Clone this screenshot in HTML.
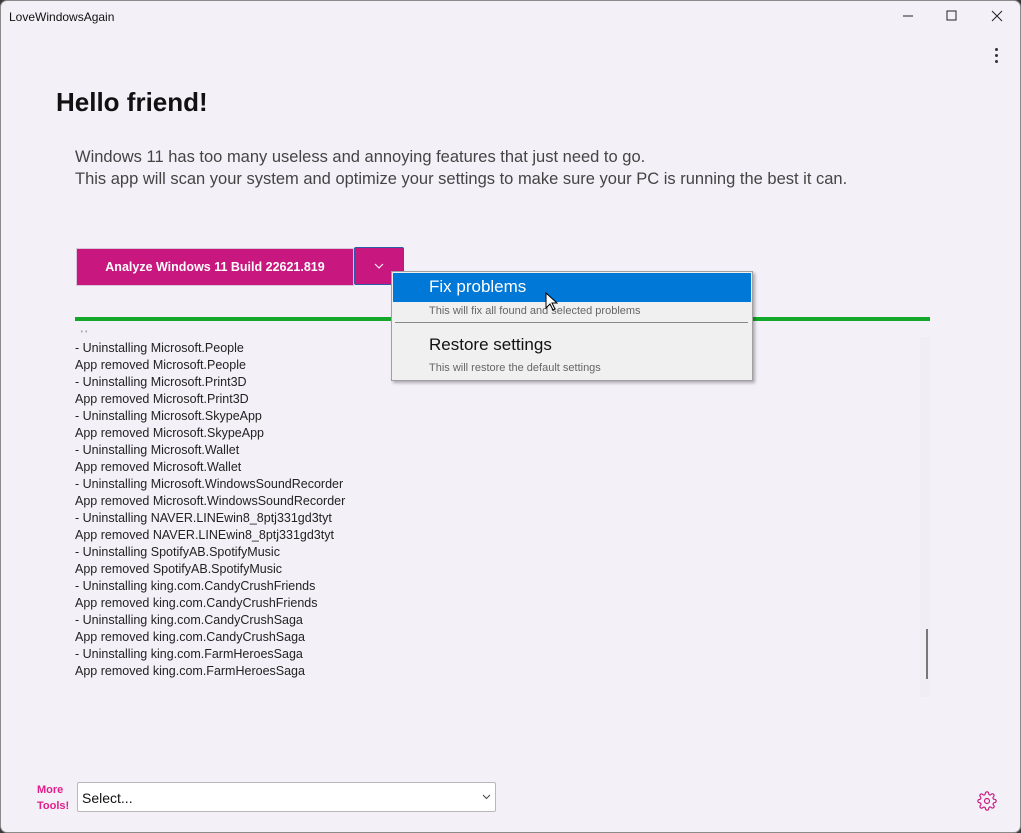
<!DOCTYPE html>
<html><head><meta charset="utf-8"><style>
body{margin:0;width:1021px;height:833px;overflow:hidden;background:#3a3a3a;font-family:"Liberation Sans",sans-serif}
#win{position:absolute;left:0;top:0;width:1021px;height:833px;box-sizing:border-box;background:#f3f0f8;border:1px solid #8a8a8a;border-radius:7px;overflow:hidden}
.t{position:absolute;white-space:nowrap}
.log div{height:17px;font-size:12.5px;color:#222;letter-spacing:0}
</style></head><body><div id="win">
<div class="t" style="left:8px;top:9px;font-size:12px;color:#111">LoveWindowsAgain</div>
<svg class="t" style="left:895px;top:4px" width="120" height="22"><g stroke="#222" fill="none" stroke-width="1"><path d="M7 11h10"/><path d="M51 6h9v9h-9z"/><path d="M96 6l10 10M106 6l-10 10"/></g></svg>
<div class="t" style="left:994px;top:47px;width:3px;height:3px;background:#333;border-radius:2px;box-shadow:0 6px 0 #333,0 12px 0 #333"></div>
<div class="t" style="left:55px;top:86px;font-size:26px;font-weight:bold;color:#111">Hello friend!</div>
<div class="t" style="left:74px;top:145px;font-size:16.5px;color:#444;line-height:22px">Windows 11 has too many useless and annoying features that just need to go.<br>This app will scan your system and optimize your settings to make sure your PC is running the best it can.</div>
<div class="t" style="left:75px;top:247px;width:276px;height:36px;background:#c8177f;border:1px solid #d8c8d8;color:#fff;font-size:12.5px;font-weight:bold;text-align:center;line-height:36px">Analyze Windows 11 Build 22621.819</div>
<div class="t" style="left:353px;top:246px;width:48px;height:36px;background:#c8177f;border:1px solid #2a5aa8;border-radius:2px"><svg style="position:absolute;left:19px;top:15px" width="10" height="6"><path d="M1 1l4 4 4-4" stroke="#fff" fill="none"/></svg></div>
<div class="t" style="left:74px;top:316px;width:855px;height:4px;background:#13a829"></div>
<div class="t" style="left:919px;top:336px;width:10px;height:360px;background:#f0edf4"></div>
<div class="t" style="left:925px;top:628px;width:2px;height:50px;background:#777"></div>
<div class="t" style="left:80px;top:328px;font-size:9px;color:#555">' '</div>
<div class="t log" style="left:74px;top:340px">
<div>- Uninstalling Microsoft.People</div><div>App removed Microsoft.People</div><div>- Uninstalling Microsoft.Print3D</div><div>App removed Microsoft.Print3D</div><div>- Uninstalling Microsoft.SkypeApp</div><div>App removed Microsoft.SkypeApp</div><div>- Uninstalling Microsoft.Wallet</div><div>App removed Microsoft.Wallet</div><div>- Uninstalling Microsoft.WindowsSoundRecorder</div><div>App removed Microsoft.WindowsSoundRecorder</div><div>- Uninstalling NAVER.LINEwin8_8ptj331gd3tyt</div><div>App removed NAVER.LINEwin8_8ptj331gd3tyt</div><div>- Uninstalling SpotifyAB.SpotifyMusic</div><div>App removed SpotifyAB.SpotifyMusic</div><div>- Uninstalling king.com.CandyCrushFriends</div><div>App removed king.com.CandyCrushFriends</div><div>- Uninstalling king.com.CandyCrushSaga</div><div>App removed king.com.CandyCrushSaga</div><div>- Uninstalling king.com.FarmHeroesSaga</div><div>App removed king.com.FarmHeroesSaga</div>
</div>
<div class="t" style="left:390px;top:270px;width:360px;height:108px;background:#f0f0f0;border:1px solid #a0a0a0;box-shadow:2px 2px 3px rgba(0,0,0,.3)">
<div style="position:absolute;left:1px;top:1px;width:358px;height:29px;background:#0078d7"></div>
<div class="t" style="left:37px;top:5px;font-size:17px;color:#fff">Fix problems</div>
<div class="t" style="left:37px;top:33px;font-size:11px;color:#666">This will fix all found and selected problems</div>
<div class="t" style="left:3px;top:50px;width:353px;height:1px;background:#888"></div>
<div class="t" style="left:37px;top:63px;font-size:17px;color:#111">Restore settings</div>
<div class="t" style="left:37px;top:90px;font-size:11px;color:#666">This will restore the default settings</div>
</div>
<svg class="t" style="left:544px;top:291px" width="14" height="20"><path d="M1 1v15l4-4 3 6 2-1-3-6h5z" fill="#fff" stroke="#000"/></svg>
<div class="t" style="left:36px;top:781px;font-size:11px;font-weight:bold;color:#e0208a;line-height:16px">More<br>Tools!</div>
<div class="t" style="left:76px;top:781px;width:417px;height:28px;background:#fff;border:1px solid #b8b8b8;border-radius:2px">
<div class="t" style="left:4px;top:7px;font-size:14px;color:#111">Select...</div>
<svg class="t" style="left:404px;top:11px" width="9" height="6"><path d="M1 1l3.5 3.5L8 1" stroke="#444" fill="none"/></svg></div>
<svg class="t" style="left:976px;top:790px" width="20" height="20" viewBox="0 0 24 24" fill="none" stroke="#c8177f" stroke-width="1.4"><circle cx="12" cy="12" r="3"/><path d="M19.4 15a1.7 1.7 0 0 0 .3 1.8l.1.1a2 2 0 1 1-2.8 2.8l-.1-.1a1.7 1.7 0 0 0-1.8-.3 1.7 1.7 0 0 0-1 1.5V21a2 2 0 1 1-4 0v-.1a1.7 1.7 0 0 0-1.1-1.5 1.7 1.7 0 0 0-1.8.3l-.1.1a2 2 0 1 1-2.8-2.800l.1-.1a1.7 1.7 0 0 0 .3-1.8 1.7 1.7 0 0 0-1.5-1H3a2 2 0 1 1 0-4h.1a1.7 1.7 0 0 0 1.5-1.1 1.7 1.7 0 0 0-.3-1.8l-.1-.1a2 2 0 1 1 2.8-2.8l.1.1a1.7 1.7 0 0 0 1.8.3H9a1.7 1.7 0 0 0 1-1.5V3a2 2 0 1 1 4 0v.1a1.7 1.7 0 0 0 1 1.5 1.7 1.7 0 0 0 1.8-.3l.1-.1a2 2 0 1 1 2.8 2.8l-.1.1a1.7 1.7 0 0 0-.3 1.8V9a1.7 1.7 0 0 0 1.5 1H21a2 2 0 1 1 0 4h-.1a1.7 1.7 0 0 0-1.5 1z"/></svg>
</div></body></html>
